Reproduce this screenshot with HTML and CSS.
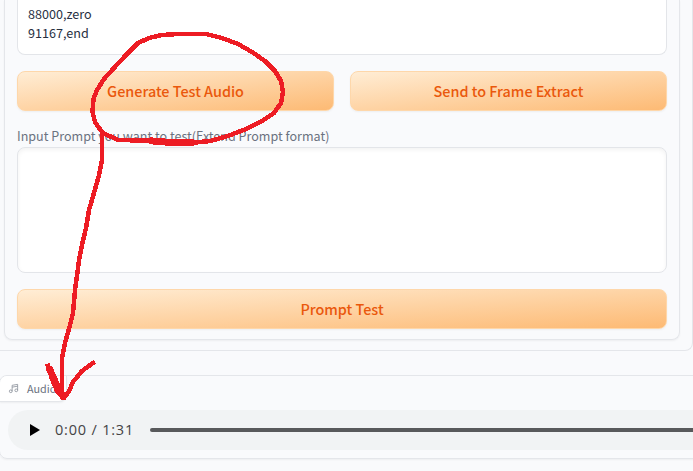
FILE: index.html
```
<!DOCTYPE html>
<html lang="en">
<head>
<meta charset="utf-8">
<title>Audio test</title>
<link rel="stylesheet" href="styles.css">
</head>
<body>
<main class="page">
  <section class="outer">
    <div class="panel">
      <div class="box timeline"><div>88000,zero</div><div>91167,end</div></div>
      <div class="actions">
        <button class="btn">Generate Test Audio</button>
        <button class="btn">Send to Frame Extract</button>
      </div>
      <div class="label">Input Prompt you want to test(Extend Prompt format)</div>
      <div class="box prompt"></div>
      <button class="btn wide">Prompt Test</button>
    </div>
  </section>
  <section class="audio">
    <div class="tag">
      <svg class="note" viewBox="0 0 24 24"><path d="M9 18V5l12-2v13M9 9l12-2"/><circle cx="6" cy="18" r="3"/><circle cx="18" cy="16" r="3"/></svg>
      <span>Audio</span>
    </div>
    <div class="player">
      <svg class="play" viewBox="0 0 10 12"><path d="M0 0L10 6L0 12Z"/></svg>
      <span class="time">0:00 / 1:31</span>
      <div class="track"></div>
    </div>
  </section>
</main>
<svg class="ink" viewBox="0 0 693 471">
  <path d="M102 132L95 122L92.500 112L93.500 99L97 90L104 79L114 68L126 55L138 43L149 38L162 35L178 34L206 34L222 38L238 44L252 52L265 61L275 71L281 81L283 92L281 103L274 113L262 121L246 129L228 136L210 141L190 143L165 141L118 140L103 133"/>
  <path d="M102 134L102 160L99 175L94 193L89 210L86 228L82 245L79 260L77 276L75 290L73 313L69 329L65 343L62 358L62 394"/>
  <path d="M48 366L52 379L57 391L64 398L69 391L73 382L82 371L93 363"/>
  <path class="thick" d="M153 141L165 142L190 142M50 370L57 386L63 396"/>
</svg>
</body>
</html>
```

FILE: styles.css
```
* { box-sizing: border-box; }
body {
  margin: 0;
  width: 693px;
  height: 471px;
  overflow: hidden;
  background: #f9fafc;
  font-family: "Noto Sans CJK JP", "Open Sans", sans-serif;
}
.page { height: 471px; overflow: hidden; }
.outer {
  height: 351px;
  border: 1px solid #e4e6ea;
  border-width: 0 1px 1px 0;
  border-radius: 0 0 8px 0;
  padding: 0 12px 10px 4px;
}
.panel {
  height: 340px;
  border: 1px solid #e4e6ea;
  border-top: 0;
  border-radius: 0 0 8px 8px;
  padding: 0 12px;
  box-shadow: 0 1px 2px rgba(0, 0, 0, .05);
}
.box {
  background: #fff;
  border: 1px solid #e3e5e9;
  border-radius: 8px;
}
.timeline {
  height: 55px;
  border-top: 0;
  border-radius: 0 0 8px 8px;
  padding: 4px 10px;
  color: #27303f;
  font-size: 12.6px;
  line-height: 19px;
}
.actions { display: flex; gap: 16px; margin-top: 16px; }
.btn {
  display: flex;
  align-items: center;
  justify-content: center;
  flex: 1;
  height: 40px;
  padding: 0 0 2px;
  border: 1px solid #fed7aa;
  border-radius: 8px;
  background: linear-gradient(to bottom right, #ffedd5, #fdba74);
  box-shadow: 0 1px 2px rgba(0, 0, 0, .05);
  color: #ea580c;
  font: 500 14.4px "Noto Sans CJK JP", "Open Sans", sans-serif;
}
.label {
  height: 36px;
  padding-top: 15px;
  color: #6b7280;
  font-size: 12.55px;
  line-height: 19px;
  white-space: nowrap;
}
.prompt { height: 126px; box-shadow: inset 0 2px 4px rgba(0, 0, 0, .05); }
.wide { width: 100%; margin-top: 16px; }
.audio {
  width: 740px;
  height: 84px;
  margin: 24px 0 0 -1px;
  border: 1px solid #e4e6ea;
  border-radius: 8px;
  box-shadow: 0 1px 2px rgba(0, 0, 0, .05);
}
.tag {
  display: flex;
  align-items: center;
  gap: 8px;
  width: 67px;
  height: 26px;
  padding: 0 0 2px 8px;
  background: #fff;
  border-bottom: 1px solid #e4e6ea;
  border-right: 1px solid #e4e6ea;
  border-radius: 7px 0 8px 0;
  box-shadow: 0 1px 2px rgba(0, 0, 0, .05);
  color: #6b7280;
  font-size: 10.8px;
}
.note { width: 11px; height: 11px; margin-top: 2px; fill: none; stroke: #8b909a; stroke-width: 1.8; }
.player {
  display: flex;
  align-items: center;
  height: 40px;
  margin: 8px 0 0 8px;
  padding-left: 22px;
  border-radius: 20px;
  background: #f1f3f4;
}
.play { width: 10px; height: 12px; }
.time {
  width: 95px;
  margin: -2px 0 0 15px;
  color: #444;
  font: 14.5px "Open Sans", sans-serif;
  letter-spacing: .8px;
  white-space: pre;
}
.track { flex: 1; height: 4px; border-radius: 2px; background: #58595b; }
.ink {
  position: absolute;
  inset: 0;
  width: 693px;
  height: 471px;
  fill: none;
  stroke: #ed1c24;
  stroke-width: 4.5;
  stroke-linecap: square;
  stroke-linejoin: round;
  shape-rendering: crispEdges;
  pointer-events: none;
}
.thick { stroke-width: 7; }
```
